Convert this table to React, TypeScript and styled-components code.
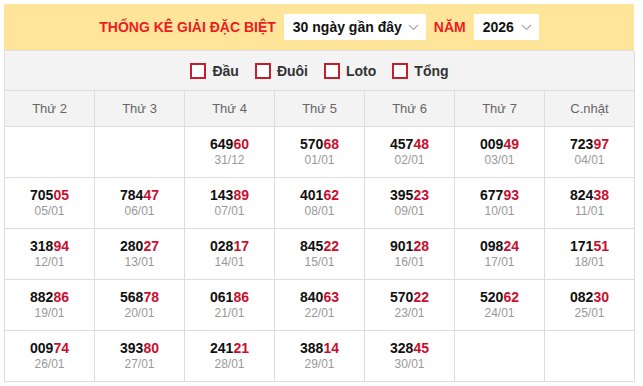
import React from 'react'
import styled, { createGlobalStyle } from 'styled-components';

const GlobalStyle = createGlobalStyle`
    body {
        margin: 0;
        background: #fff;
        font-family: "Liberation Sans", Arial, sans-serif;
    }
`;

const Wrap = styled.div`
    margin: 4px;
    width: 631px;
`;
const TopBar = styled.div`
    height: 46px;
    background: #fee59a;
    border-bottom: 1px solid #ddd;
    display: flex;
    align-items: center;
    justify-content: center;
    gap: 8px;
    width: 630px;
`;
const Title = styled.span`
    color: #ec1c24;
    font-size: 14px;
    font-weight: bold;
    text-transform: uppercase;
`;
const Select = styled.div<{ $w: number }>`
    width: ${p => p.$w}px;
    height: 26px;
    box-sizing: border-box;
    background: #fff;
    display: flex;
    align-items: center;
    justify-content: space-between;
    padding: 0 7px 0 9px;
    font-size: 14px;
    font-weight: bold;
    color: #111;
`;
const FilterBar = styled.div`
    height: 39px;
    background: #f3f3f3;
    border: 1px solid #ddd;
    border-top: none;
    display: flex;
    align-items: center;
    justify-content: center;
    gap: 16px;
    width: 629px;
`;
const Check = styled.label`
    display: flex;
    align-items: center;
    gap: 6px;
    font-size: 14px;
    font-weight: bold;
    color: #333;
`;
const Box = styled.span`
    width: 16px;
    height: 16px;
    box-sizing: border-box;
    border: 2px solid #c3202f;
    background: #fff;
`;
const Grid = styled.div`
    display: grid;
    grid-template-columns: repeat(7, 90px);
    border-left: 1px solid #ddd;
`;
const Head = styled.div`
    height: 35px;
    background: #f3f3f3;
    border-right: 1px solid #ddd;
    border-bottom: 1px solid #ddd;
    display: flex;
    align-items: center;
    justify-content: center;
    font-size: 13px;
    color: #666;
`;
const Cell = styled.div`
    height: 50px;
    border-right: 1px solid #ddd;
    border-bottom: 1px solid #ddd;
    display: flex;
    flex-direction: column;
    align-items: center;
    justify-content: center;
`;
const Num = styled.div`
    font-size: 14px;
    font-weight: bold;
    color: #111;
    line-height: 16px;
    span { color: #c8102e; }
`;
const Day = styled.div`
    font-size: 12px;
    color: #999;
    line-height: 16px;
`;

const Chevron = () => (
    <svg width="11" height="7" viewBox="0 0 11 7">
        <polyline points="1,1 5.5,5.5 10,1" fill="none" stroke="#aaa" strokeWidth="1.2" />
    </svg>
);

const days = ['Thứ 2', 'Thứ 3', 'Thứ 4', 'Thứ 5', 'Thứ 6', 'Thứ 7', 'C.nhật'];

const results: (string[] | null)[] = [
    null, null,
    ['64960', '31/12'], ['57068', '01/01'], ['45748', '02/01'], ['00949', '03/01'], ['72397', '04/01'],
    ['70505', '05/01'], ['78447', '06/01'], ['14389', '07/01'], ['40162', '08/01'], ['39523', '09/01'], ['67793', '10/01'], ['82438', '11/01'],
    ['31894', '12/01'], ['28027', '13/01'], ['02817', '14/01'], ['84522', '15/01'], ['90128', '16/01'], ['09824', '17/01'], ['17151', '18/01'],
    ['88286', '19/01'], ['56878', '20/01'], ['06186', '21/01'], ['84063', '22/01'], ['57022', '23/01'], ['52062', '24/01'], ['08230', '25/01'],
    ['00974', '26/01'], ['39380', '27/01'], ['24121', '28/01'], ['38814', '29/01'], ['32845', '30/01'],
    null, null,
];

const App: React.FC = () => {
    return (
        <>
            <GlobalStyle />
            <Wrap>
                <TopBar>
                    <Title>Thống kê giải đặc biệt</Title>
                    <Select $w={142}>30 ngày gần đây <Chevron /></Select>
                    <Title>Năm</Title>
                    <Select $w={65}>2026 <Chevron /></Select>
                </TopBar>
                <FilterBar>
                    {['Đầu', 'Đuôi', 'Loto', 'Tổng'].map(t => (
                        <Check key={t}><Box />{t}</Check>
                    ))}
                </FilterBar>
                <Grid>
                    {days.map(d => <Head key={d}>{d}</Head>)}
                    {results.map((r, i) => (
                        <Cell key={i}>
                            {r && (
                                <>
                                    <Num>{r[0].slice(0, 3)}<span>{r[0].slice(3)}</span></Num>
                                    <Day>{r[1]}</Day>
                                </>
                            )}
                        </Cell>
                    ))}
                </Grid>
            </Wrap>
        </>
    )
}

export default App
